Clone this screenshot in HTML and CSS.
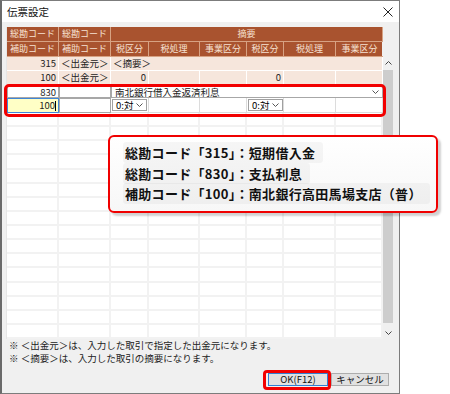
FILE: index.html
```html
<!DOCTYPE html>
<html lang="ja">
<head>
<meta charset="utf-8">
<title>伝票設定</title>
<link rel="stylesheet" href="styles.css">
</head>
<body>
<div class="page">
  <div class="window">
    <div class="titlebar">
      <span class="title">伝票設定</span>
      <svg class="close" width="10" height="10" viewBox="0 0 10 10"><path d="M0.5 0.5L9.5 9.5M9.5 0.5L0.5 9.5" stroke="#222" stroke-width="1"/></svg>
    </div>
    <div class="content">
      <div class="gridwrap">
        <div class="table">
          <div class="header">
            <div class="hc">総勘コード</div>
            <div class="hc">総勘コード</div>
            <div class="hc span6">摘要</div>
            <div class="hc">補助コード</div>
            <div class="hc">補助コード</div>
            <div class="hc">税区分</div>
            <div class="hc">税処理</div>
            <div class="hc">事業区分</div>
            <div class="hc">税区分</div>
            <div class="hc">税処理</div>
            <div class="hc last">事業区分</div>
          </div>
          <div class="row data">
            <div class="c num">315</div>
            <div class="c ctr">＜出金元＞</div>
            <div class="c span6">＜摘要＞</div>
          </div>
          <div class="row data">
            <div class="c num">100</div>
            <div class="c ctr">＜出金元＞</div>
            <div class="c num">0</div>
            <div class="c"></div>
            <div class="c"></div>
            <div class="c num">0</div>
            <div class="c"></div>
            <div class="c"></div>
          </div>
          <div class="edit">
            <div class="row erow1">
              <div class="box num">830</div>
              <div class="box"></div>
              <div class="box combo span6"><span>南北銀行借入金返済利息</span><svg width="7" height="4" viewBox="0 0 7 4"><path d="M0.5 0.5L3.5 3.5L6.5 0.5" stroke="#555" fill="none"/></svg></div>
            </div>
            <div class="row erow2">
              <div class="box num focus">100<i class="caret"></i></div>
              <div class="box"></div>
              <div class="cell"><div class="sel"><span>0:対</span><svg width="7" height="4" viewBox="0 0 7 4"><path d="M0.5 0.5L3.5 3.5L6.5 0.5" stroke="#555" fill="none"/></svg></div></div>
              <div class="cell"></div>
              <div class="cell"></div>
              <div class="cell"><div class="sel"><span>0:対</span><svg width="7" height="4" viewBox="0 0 7 4"><path d="M0.5 0.5L3.5 3.5L6.5 0.5" stroke="#555" fill="none"/></svg></div></div>
              <div class="cell"></div>
              <div class="cell"></div>
            </div>
          </div>
          <div class="empty">
            <div class="row er"><div></div><div></div><div></div><div></div><div></div><div></div><div></div><div></div></div>
            <div class="row er"><div></div><div></div><div></div><div></div><div></div><div></div><div></div><div></div></div>
            <div class="row er"><div></div><div></div><div></div><div></div><div></div><div></div><div></div><div></div></div>
            <div class="row er"><div></div><div></div><div></div><div></div><div></div><div></div><div></div><div></div></div>
            <div class="row er"><div></div><div></div><div></div><div></div><div></div><div></div><div></div><div></div></div>
            <div class="row er"><div></div><div></div><div></div><div></div><div></div><div></div><div></div><div></div></div>
            <div class="row er"><div></div><div></div><div></div><div></div><div></div><div></div><div></div><div></div></div>
            <div class="row er"><div></div><div></div><div></div><div></div><div></div><div></div><div></div><div></div></div>
            <div class="row er"><div></div><div></div><div></div><div></div><div></div><div></div><div></div><div></div></div>
            <div class="row er"><div></div><div></div><div></div><div></div><div></div><div></div><div></div><div></div></div>
            <div class="row er"><div></div><div></div><div></div><div></div><div></div><div></div><div></div><div></div></div>
            <div class="row er"><div></div><div></div><div></div><div></div><div></div><div></div><div></div><div></div></div>
            <div class="row er"><div></div><div></div><div></div><div></div><div></div><div></div><div></div><div></div></div>
            <div class="row er"><div></div><div></div><div></div><div></div><div></div><div></div><div></div><div></div></div>
            <div class="row er"><div></div><div></div><div></div><div></div><div></div><div></div><div></div><div></div></div>
            <div class="row er"><div></div><div></div><div></div><div></div><div></div><div></div><div></div><div></div></div>
          </div>
        </div>
        <div class="scroll">
          <svg class="arrow" width="7" height="4" viewBox="0 0 7 4"><path d="M0.5 3.5L3.5 0.5L6.5 3.5" stroke="#444" fill="none"/></svg>
          <div class="thumb"></div>
          <svg class="arrow" width="7" height="4" viewBox="0 0 7 4"><path d="M0.5 0.5L3.5 3.5L6.5 0.5" stroke="#444" fill="none"/></svg>
        </div>
      </div>
      <div class="notes">
        <p>※ ＜出金元＞は、入力した取引で指定した出金元になります。</p>
        <p>※ ＜摘要＞は、入力した取引の摘要になります。</p>
      </div>
      <div class="buttons">
        <button class="btn ok">OK(F12)</button>
        <button class="btn">キャンセル</button>
      </div>
    </div>
    <div class="mark-rows"></div>
    <div class="mark-ok"></div>
  </div>
  <div class="callout">
    <p><span>総勘コード「315」：短期借入金</span></p>
    <p><span>総勘コード「830」：支払利息</span></p>
    <p><span>補助コード「100」：南北銀行高田馬場支店（普）</span></p>
  </div>
</div>
</body>
</html>
```

FILE: styles.css
```css
* { box-sizing: border-box; margin: 0; padding: 0; }
html, body { background: #ffffff; }
body {
  font-family: "Noto Sans CJK JP", "Noto Sans", sans-serif;
  font-size: 10px;
  color: #000;
}
.page { position: relative; width: 450px; height: 394px; overflow: hidden; }
.window {
  position: relative;
  width: 400px;
  height: 394px;
  border: 1px solid #7c7c7c;
  border-left: 2px solid #6a6a6a;
  background: #f0f0f0;
  display: flex;
  flex-direction: column;
}
.titlebar {
  height: 21px;
  background: #ffffff;
  display: flex;
  align-items: center;
  justify-content: space-between;
  padding: 0 6px 0 5px;
}
.title { font-size: 10.5px; line-height: 21px; color: #111; }
.close { display: block; }
.content { padding: 5px 10px 0 4px; display: flex; flex-direction: column; flex: 1; }
.gridwrap { display: flex; height: 312px; }
.table {
  width: 376px;
  display: flex;
  flex-direction: column;
  background: #ffffff;
  border-left: 1px solid #e6e6e6;
}
.header, .row {
  display: grid;
  grid-template-columns: 52px 52px 38px 51px 47px 37px 52px 47px;
}
.header {
  grid-template-rows: 15px 15px;
  background: #a9532f;
}
.hc {
  color: #f7e2d3;
  font-size: 9px;
  line-height: 14px;
  text-align: center;
  border-right: 1px solid #d7a283;
  border-bottom: 1px solid #d7a283;
  white-space: nowrap;
  overflow: hidden;
}
.hc.last { border-right: 0; }
.span6 { grid-column: span 6; }
.row.data { height: 14px; background: #f6e6dc; }
.c {
  font-size: 9.5px;
  line-height: 13px;
  border-right: 1px solid #ffffff;
  border-bottom: 1px solid #ffffff;
  padding: 0 2px;
  white-space: nowrap;
  overflow: hidden;
  color: #222;
}
.num { text-align: right; }
.ctr { text-align: center; }
.c.span6 { padding-left: 2px; }
.edit { padding-top: 1px; background: #ffffff; }
.erow1 { height: 12px; }
.erow2 { height: 15px; }
.box {
  background: #fff;
  border: 1px solid #a7a7a7;
  font-size: 9.5px;
  line-height: 10px;
  padding: 0 2px;
  position: relative;
  color: #222;
}
.erow2 .box { line-height: 13px; }
.box.focus {
  background: #ffffc6;
  border: 1px solid #3f86d9;
}
.caret {
  display: inline-block;
  width: 1px;
  height: 10px;
  background: #000;
  vertical-align: middle;
  margin-left: 0;
}
.combo {
  display: flex;
  justify-content: space-between;
  align-items: center;
  padding: 0 3px 0 3px;
}
.combo span { line-height: 10px; }
.cell {
  border-right: 1px solid #dcdcdc;
  border-bottom: 1px solid #dcdcdc;
  padding: 1px 1px 0 1px;
}
.sel {
  width: 35px;
  height: 12px;
  border: 1px solid #a0a0a0;
  background: #fff;
  display: flex;
  align-items: center;
  justify-content: space-between;
  padding: 0 3px 0 3px;
  font-size: 9.5px;
  line-height: 10px;
}
.empty { flex: 1; background: #ffffff; }
.row.er { height: 14.125px; }
.row.er div {
  border-right: 2px solid #f2f2f2;
  border-bottom: 2px solid #f2f2f2;
}
.scroll {
  width: 12px;
  margin-left: 1px;
  padding-top: 30px;
  display: flex;
  flex-direction: column;
  align-items: center;
}
.arrow { display: block; margin: 4px 0; }
.thumb { width: 10px; flex: 1; background: #cdcdcd; margin: 1px 0 4px; }
.notes { padding-left: 3px; padding-top: 0; }
.notes p { font-size: 9.5px; line-height: 13px; color: #222; white-space: nowrap; }
.buttons {
  display: flex;
  justify-content: flex-end;
  gap: 3px;
  margin-top: 8px;
}
.btn {
  height: 13px;
  background: #e1e1e1;
  border: 1px solid #adadad;
  font-family: "Noto Sans CJK JP", sans-serif;
  font-size: 9.5px;
  line-height: 11px;
  color: #111;
}
.btn.ok { width: 60px; border-color: #2f7fd3; }
.btn:last-child { width: 58px; }
.mark-rows {
  position: absolute;
  left: 2px;
  top: 83px;
  width: 382px;
  height: 33px;
  border: 3px solid #f20000;
  border-radius: 5px;
}
.mark-ok {
  position: absolute;
  left: 261px;
  top: 369px;
  width: 68px;
  height: 20px;
  border: 3px solid #f20000;
  border-radius: 4px;
}
.callout {
  position: absolute;
  left: 108px;
  top: 135px;
  width: 330px;
  height: 78px;
  border: 2px solid #f00000;
  border-radius: 6px;
  background: linear-gradient(#ffffff, #f7f7f7);
  box-shadow: 3px 3px 2px rgba(0, 0, 0, 0.18);
  padding: 6px 0 0 13px;
}
.callout p {
  font-size: 13px;
  font-weight: 700;
  line-height: 20.5px;
  letter-spacing: 0.3px;
  white-space: nowrap;
  color: #111;
}
.callout span {
  background: rgba(0, 0, 0, 0.035);
  padding: 1px 8px 1px 2px;
  border-radius: 3px;
}
```
